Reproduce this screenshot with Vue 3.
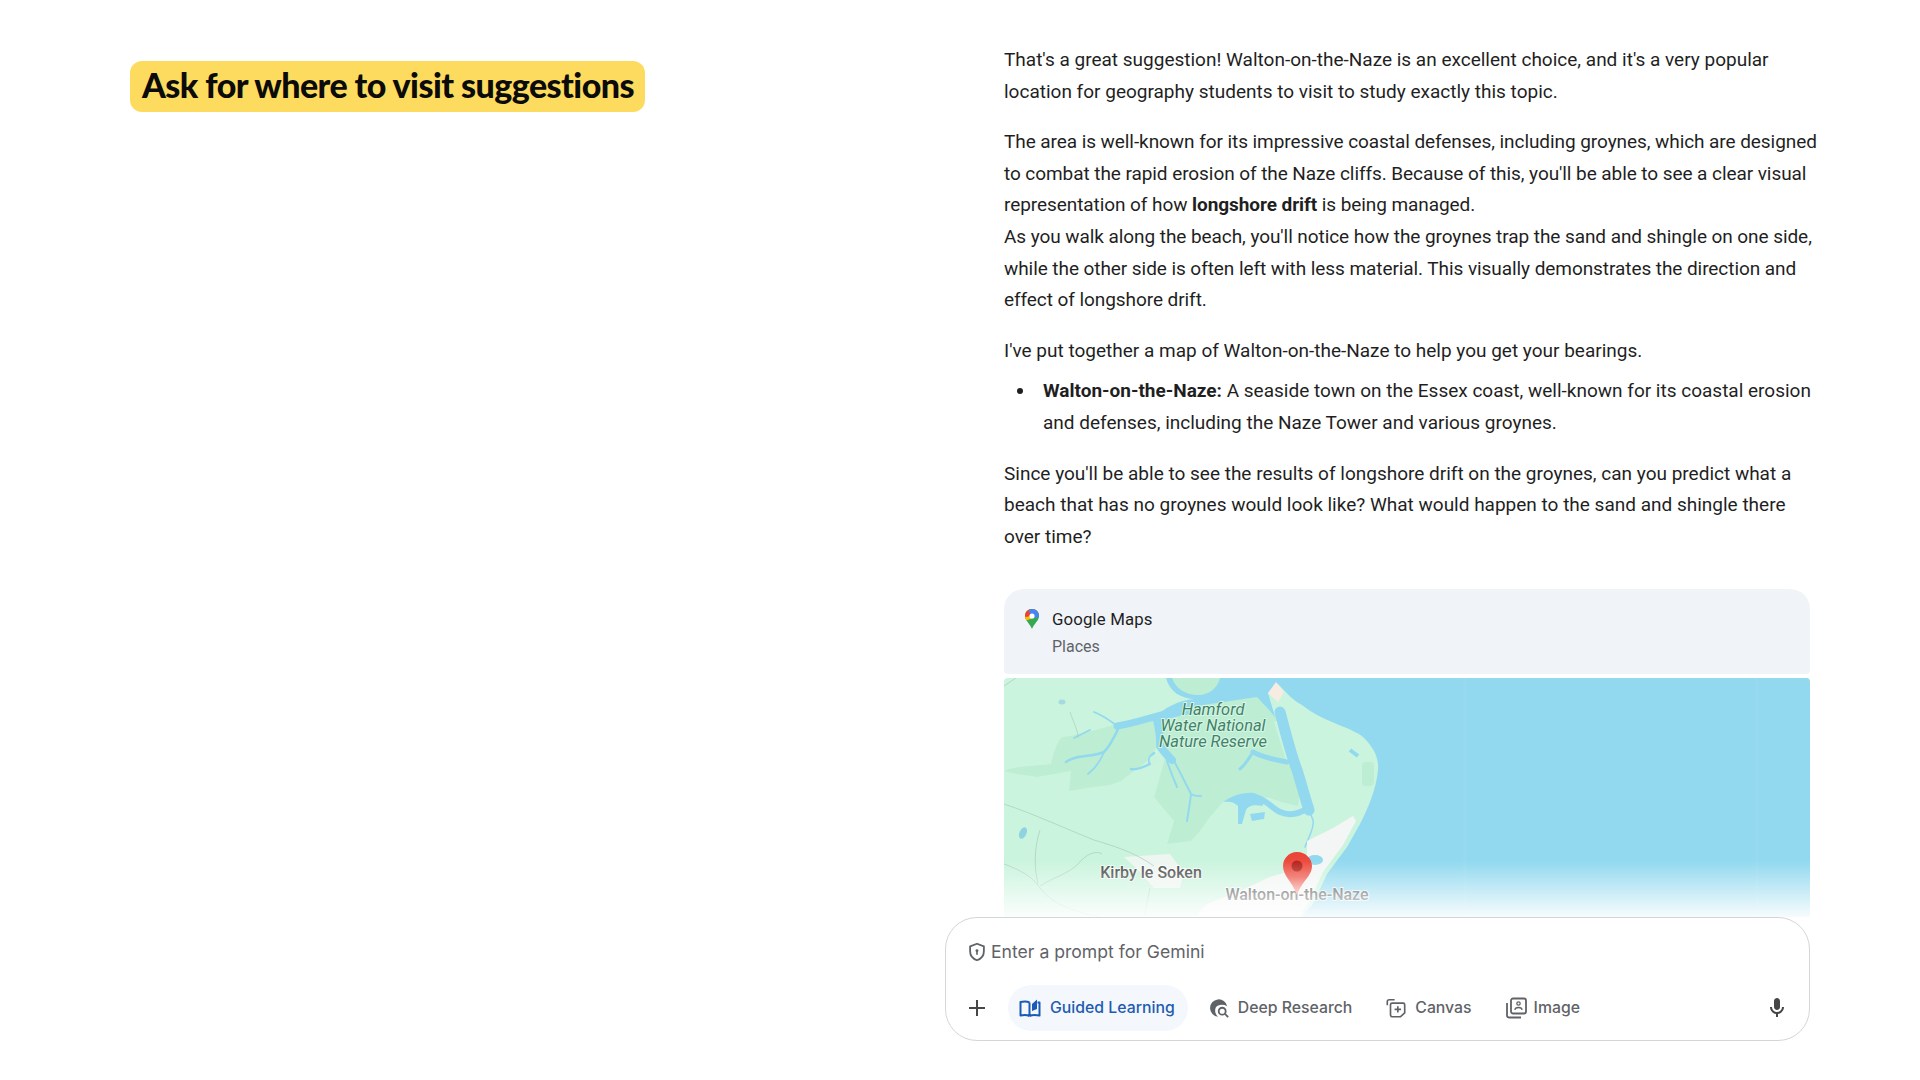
<script setup>
const chips = [
  { id: 'deep', label: 'Deep Research' },
  { id: 'canvas', label: 'Canvas' },
  { id: 'image', label: 'Image' }
]
</script>

<template>
  <div class="page">
    <section class="left">
      <h1 class="headline">Ask for where to visit suggestions</h1>
    </section>
    <section class="right">
      <div class="answer">
        <p>That's a great suggestion! Walton-on-the-Naze is an excellent choice, and it's a very popular location for geography students to visit to study exactly this topic.</p>
        <p class="wide">The area is well-known for its impressive coastal defenses, including groynes, which are designed to combat the rapid erosion of the Naze cliffs. Because of this, you'll be able to see a clear visual representation of how <b>longshore drift</b> is being managed.<br>As you walk along the beach, you'll notice how the groynes trap the sand and shingle on one side, while the other side is often left with less material. This visually demonstrates the direction and effect of longshore drift.</p>
        <p class="tight">I've put together a map of Walton-on-the-Naze to help you get your bearings.</p>
        <ul>
          <li><b>Walton-on-the-Naze:</b> A seaside town on the Essex coast, well-known for its coastal erosion and defenses, including the Naze Tower and various groynes.</li>
        </ul>
        <p>Since you'll be able to see the results of longshore drift on the groynes, can you predict what a beach that has no groynes would look like? What would happen to the sand and shingle there over time?</p>

        <div class="card">
          <header class="card-head">
            <svg class="maps-logo" viewBox="0 0 14 20" width="14" height="20">
              <defs>
                <clipPath id="mapspin"><path d="M7 0C3 0 0 3 0 7c0 4.600 4.800 7.400 7 13 2.200-5.600 7-8.400 7-13 0-4-3-7-7-7z" /></clipPath>
              </defs>
              <g clip-path="url(#mapspin)">
                <rect width="14" height="20" fill="#34a853" />
                <path d="M0 0h14v7L0 12z" fill="#fbbc04" />
                <path d="M0 0h14v7H7L0 8z" fill="#ea4335" />
                <path d="M4 0h10v8L9 9 4 3z" fill="#4285f4" />
              </g>
              <circle cx="7" cy="7" r="2.600" fill="#fff" />
            </svg>
            <div class="card-titles">
              <div class="card-title">Google Maps</div>
              <div class="card-sub">Places</div>
            </div>
          </header>
          <div class="map">
            <svg class="map-svg" viewBox="0 0 806 240" width="806" height="240">
              <rect width="806" height="240" fill="#cbf4de" />
              <!-- sea and the open water behind the marsh -->
              <path d="M162 0H806V240H296L309 226 323 196 343 169 356 146C364 130 372 112 374 92 375 80 370 70 360 60 354 54 342 50 328 44 318 40 308 35 298 27 288 22 282 14 274 6L264 15 272 42 186 42 150 40C160 30 175 22 190 21 176 20 166 14 162 0z" fill="#92d9ef" />
              <!-- marshes -->
              <path d="M0 93C10 88 30 88 47 86 50 72 54 62 58 59 70 58 92 52 113 46L150 40 152 70 143 83 117 103C108 107 100 108 90 109L65 113 67 93 33 99 13 96z" fill="#bdeed3" />
              <path d="M158 42C168 36 176 32 186 29L253 19 266 33 274 43 286 84 296 113 294 128C286 126 276 124 266 120L236 116 219 124 206 139 196 153 187 163 163 166 170 143 150 119 160 84z" fill="#bdeed3" />
              <path d="M168 0C172 11 182 17 194 17 206 17 214 9 216 0z" fill="#bdeed3" />
              <path d="M264 15L272 4 280 14 274 24z" fill="#f7ece2" />
              <path d="M270 44L276 42 290 90 292 96 282 82z" fill="#cbf4de" />
              <!-- channels -->
              <g fill="none" stroke="#92d9ef" stroke-linecap="round" stroke-linejoin="round">
                <path d="M276 34C281 52 286 74 293 92 298 108 301 120 305 132" stroke-width="11" />
                <path d="M305 132L309 142C311 150 304 160 301 169" stroke-width="1.500" />
                <path d="M283 84C272 82 260 80 249 74" stroke-width="5" />
                <path d="M249 74C245 80 242 86 236 91" stroke-width="3" />
                <path d="M186 32C170 34 160 38 153 42 155 50 156 60 156 68 160 74 164 78 168 82" stroke-width="8" />
                <path d="M170 34C150 38 130 46 113 48" stroke-width="7" />
                <path d="M113 48C108 44 100 38 90 34" stroke-width="1.800" />
                <path d="M115 49C110 60 106 68 100 74 86 80 72 76 62 84" stroke-width="2.600" />
                <path d="M100 74C96 84 92 90 84 96M86 52L70 60" stroke-width="1.800" />
                <path d="M150 75C146 78 144 82 146 86 138 90 132 92 127 91" stroke-width="2.500" />
                <path d="M163 83C166 92 170 102 173 109" stroke-width="2" />
                <path d="M170 83C176 94 182 106 187 116 190 118 194 118 197 118M187 116C186 126 184 136 183 143" stroke-width="2" />
                <path d="M304 130C295 136 285 138 276 134 268 130 262 122 252 119" stroke-width="6" />
              </g>
              <path d="M219 124C228 118 238 114 250 115 258 118 262 126 258 128 250 126 244 128 242 132L238 146 234 146 234 128C230 124 226 123 219 124z" fill="#92d9ef" />
              <path d="M246 136L261 134 260 141 248 143z" fill="#92d9ef" />
              <circle cx="150" cy="82" r="4.500" fill="#c9f3dc" />
              <!-- town -->
              <path d="M303 176L303 163 329 150 349 138 352 143 339 167 319 194 305 224 294 240H190L203 226 236 213 266 199 286 193z" fill="#f3f6f4" />
              <path d="M120 179L166 176 180 195 176 210 150 210 132 190z" fill="#eef6f1" />
              <ellipse cx="19" cy="155" rx="3.500" ry="6" transform="rotate(25 19 155)" fill="#8fd3e0" />
              <ellipse cx="58" cy="24" rx="3.500" ry="2.500" fill="#a4dbe0" />
              <ellipse cx="311" cy="182" rx="8" ry="5" fill="#92d9ef" />
              <path d="M346 72L354 78" stroke="#92d9ef" stroke-width="4" />
              <rect x="358" y="84" width="12" height="24" rx="4" fill="#bdeed3" />
              <!-- roads -->
              <g fill="none" stroke="#a9ccb9" stroke-opacity=".7" stroke-width="1">
                <path d="M0 126C30 136 60 150 90 162 110 168 130 174 150 188" />
                <path d="M36 152C30 170 30 190 34 206M0 186C16 192 28 198 36 210 48 226 70 234 100 240M36 208C48 200 64 196 74 186 82 176 92 172 98 176" />
                <path d="M146 210L140 240M12 0L0 8M66 34C70 46 74 52 74 60" />
              </g>
              <g fill="none" stroke="#ffffff" stroke-opacity=".05" stroke-width="3">
                <path d="M461 0V240M753 0V240" />
              </g>
              <!-- labels -->
              <g class="nature">
                <text x="209" y="37">Hamford</text>
                <text x="209" y="53">Water National</text>
                <text x="209" y="69">Nature Reserve</text>
              </g>
              <text class="place" x="147" y="200">Kirby le Soken</text>
              <text class="place" x="293" y="222">Walton-on-the-Naze</text>
              <!-- pin -->
              <defs>
                <linearGradient id="pinfill" x1="0" y1="0" x2="0" y2="1">
                  <stop offset="0" stop-color="#ea4335" />
                  <stop offset=".6" stop-color="#ee5a4d" />
                  <stop offset="1" stop-color="#f7a69f" />
                </linearGradient>
              </defs>
              <path d="M293 174C284.500 174 279 181 279 188 279 198 288 203 293 217 298 203 308 198 308 188 308 181 302 174 293 174z" fill="url(#pinfill)" />
              <circle cx="293" cy="188" r="5.500" fill="#b3261e" />
            </svg>
            <div class="fade"></div>
          </div>
        </div>
      </div>

      <div class="composer">
        <div class="prompt">
          <svg class="icon shield" viewBox="0 0 24 24" width="22" height="22">
            <path d="M12 3l7.500 2.800v5.400c0 4.500-3 8.300-7.500 9.800-4.500-1.500-7.500-5.300-7.500-9.800V5.800z" fill="none" stroke="#5f6368" stroke-width="2" stroke-linejoin="round" />
            <circle cx="12" cy="10.500" r="1.600" fill="#5f6368" />
            <path d="M12 11v4" stroke="#5f6368" stroke-width="1.800" />
          </svg>
          <span>Enter a prompt for Gemini</span>
        </div>
        <div class="tools">
          <button class="plus" aria-label="Add">
            <svg viewBox="0 0 18 18" width="18" height="18">
              <path d="M9 1v16M1 9h16" stroke="#444746" stroke-width="2" />
            </svg>
          </button>
          <button class="chip active">
            <svg viewBox="0 0 24 24" width="24" height="24">
              <path d="M11.500 6.500C9.500 5.500 5 5.500 2.500 6v13.500c2.500-.5 7-.5 9 .5m0-13.500V20m0 0c2-1 7-1 10-.5V6.500h-2" fill="none" stroke="#1a5bb5" stroke-width="2" stroke-linejoin="round" />
              <path d="M14 15V8l5-4.500V13z" fill="#1a5bb5" />
            </svg>
            <span>Guided Learning</span>
          </button>
          <button v-for="c in chips" :key="c.id" class="chip" :class="c.id">
            <svg v-if="c.id === 'deep'" viewBox="0 0 24 24" width="22" height="22">
              <path d="M21 10A9.500 9.500 0 1 0 11 21.500 C8 19 7 15 8.500 11.500 10.500 8.500 16 7.500 21 10z" fill="#5f6368" />
              <circle cx="15.500" cy="15.500" r="3.800" fill="none" stroke="#5f6368" stroke-width="2" />
              <path d="M18.500 18.500L22 22" stroke="#5f6368" stroke-width="2" />
            </svg>
            <svg v-else-if="c.id === 'canvas'" viewBox="0 0 24 24" width="22" height="22">
              <path d="M2.500 9V5c0-1 .8-2 2-2h6" fill="none" stroke="#5f6368" stroke-width="1.800" />
              <path d="M6 8.500c0-1 .8-1.800 1.800-1.800h12c1 0 1.700.7 1.700 1.700v9L17 21.500H7.800c-1 0-1.800-.8-1.800-1.800z" fill="none" stroke="#5f6368" stroke-width="1.800" stroke-linejoin="round" />
              <path d="M14 10v7M10.500 13.500h7" stroke="#5f6368" stroke-width="1.800" />
            </svg>
            <svg v-else viewBox="0 0 24 24" width="24" height="24">
              <path d="M3 7v12.500c0 1 .8 2 2 2h12" fill="none" stroke="#5f6368" stroke-width="1.800" />
              <rect x="7" y="2.500" width="15" height="15" rx="2" fill="none" stroke="#5f6368" stroke-width="1.800" />
              <circle cx="14.500" cy="7.500" r="1.700" fill="none" stroke="#5f6368" stroke-width="1.300" />
              <path d="M11 14c0-2 2-2.500 3.500-2.500S18 12 18 14" fill="none" stroke="#5f6368" stroke-width="1.300" />
            </svg>
            <span>{{ c.label }}</span>
          </button>
          <button class="mic" aria-label="Microphone">
            <svg viewBox="0 0 24 24" width="24" height="24">
              <path d="M12 14c1.660 0 3-1.340 3-3V5c0-1.660-1.340-3-3-3S9 3.340 9 5v6c0 1.660 1.340 3 3 3zm5-3c0 2.760-2.240 5-5 5s-5-2.240-5-5H5c0 3.530 2.610 6.430 6 6.920V21h2v-3.080c3.390-.49 6-3.390 6-6.920h-2z" fill="#444746" />
            </svg>
          </button>
        </div>
      </div>
    </section>
  </div>
</template>

<style scoped>
.page {
  display: flex;
  width: 1920px;
  height: 1080px;
  overflow: hidden;
  background: #fff;
  font-family: Roboto, "Liberation Sans", sans-serif;
  color: #1f1f1f;
}
.left {
  width: 945px;
  flex: none;
  box-sizing: border-box;
  padding: 61px 0 0 130px;
}
.headline {
  display: inline-block;
  margin: 0;
  height: 51px;
  line-height: 47px;
  box-sizing: border-box;
  padding: 0 12px;
  width: 515px;
  white-space: nowrap;
  background: #fddb5e;
  border-radius: 12px;
  font-family: Lato, "Noto Sans", sans-serif;
  font-size: 34px;
  font-weight: 900;
  letter-spacing: -0.55px;
  color: #0b0b0b;
}
.right {
  width: 865px;
  flex: none;
}
.answer {
  box-sizing: border-box;
  padding: 44px 0 0 59px;
  font-size: 19px;
  line-height: 31.7px;
}
.answer p {
  margin: 0 -6px 18.5px 0;
}
.answer p.wide {
  margin-right: -20px;
  letter-spacing: -0.07px;
}
.answer p.tight {
  margin-bottom: 9px;
}
.answer b {
  font-weight: 700;
}
.answer ul {
  margin: 0 -6px 19px 0;
  padding: 0 0 0 39px;
  list-style: none;
}
.answer li {
  position: relative;
}
.answer li::before {
  content: "";
  position: absolute;
  left: -26px;
  top: 13px;
  width: 6px;
  height: 6px;
  border-radius: 50%;
  background: #1f1f1f;
}
.card {
  margin-top: 36px;
  width: 806px;
}
.card-head {
  display: flex;
  align-items: flex-start;
  gap: 13px;
  height: 85px;
  box-sizing: border-box;
  padding: 19px 0 0 21px;
  background: #f0f4f9;
  border-radius: 20px 20px 4px 4px;
}
.maps-logo {
  flex: none;
  margin-top: 1px;
}
.card-titles {
  display: flex;
  flex-direction: column;
  gap: 4px;
}
.card-title {
  font-size: 16.8px;
  line-height: 23px;
  letter-spacing: .15px;
  color: #1f1f1f;
}
.card-sub {
  font-size: 16px;
  line-height: 23px;
  color: #5f6368;
}
.map {
  position: relative;
  margin-top: 4px;
  height: 239px;
  overflow: hidden;
  border-radius: 4px 4px 0 0;
}
.map-svg {
  display: block;
}
.nature text {
  font-size: 16.4px;
  font-style: italic;
  fill: #3f8266;
  text-anchor: middle;
  stroke: #d8f5e6;
  stroke-width: 2px;
  paint-order: stroke;
}
.place {
  font-size: 16px;
  font-weight: 500;
  fill: #4a4a4a;
  text-anchor: middle;
  stroke: #fff;
  stroke-opacity: .7;
  stroke-width: 2px;
  paint-order: stroke;
}
.fade {
  position: absolute;
  left: 0;
  right: 0;
  bottom: 0;
  height: 56px;
  background: linear-gradient(to bottom, rgba(255, 255, 255, 0), rgba(255, 255, 255, .92));
}
.composer {
  box-sizing: border-box;
  width: 865px;
  height: 124px;
  border: 1px solid #d3d6d9;
  border-radius: 32px;
  background: #fff;
  padding: 22px 20px 0 20px;
}
.prompt {
  display: flex;
  align-items: center;
  gap: 3px;
  height: 24px;
  font-family: Inter, Roboto, sans-serif;
  font-size: 17.6px;
  color: #5f6368;
}
.tools {
  display: flex;
  align-items: center;
  margin-top: 21px;
  height: 46px;
}
button {
  border: 0;
  background: none;
  padding: 0;
  font: inherit;
  display: flex;
  align-items: center;
}
.plus {
  width: 23px;
  margin-right: 17px;
  margin-left: 2px;
}
.chip {
  height: 46px;
  border-radius: 23px;
  gap: 8px;
  font-family: Inter, Roboto, sans-serif;
  font-size: 15.8px;
  font-weight: 500;
  color: #5f6368;
  padding: 0 13px;
  white-space: nowrap;
}
.chip.active {
  background: #f4f7fb;
  color: #1f5bb0;
  padding: 0 13px 0 10px;
}
.chip.deep {
  margin-left: 7px;
}
.chip.canvas {
  margin-left: 7px;
}
.chip.image {
  margin-left: 6px;
  gap: 6px;
}
.mic {
  margin-left: auto;
}
</style>

<style>
html, body {
  margin: 0;
  background: #fff;
}
</style>
